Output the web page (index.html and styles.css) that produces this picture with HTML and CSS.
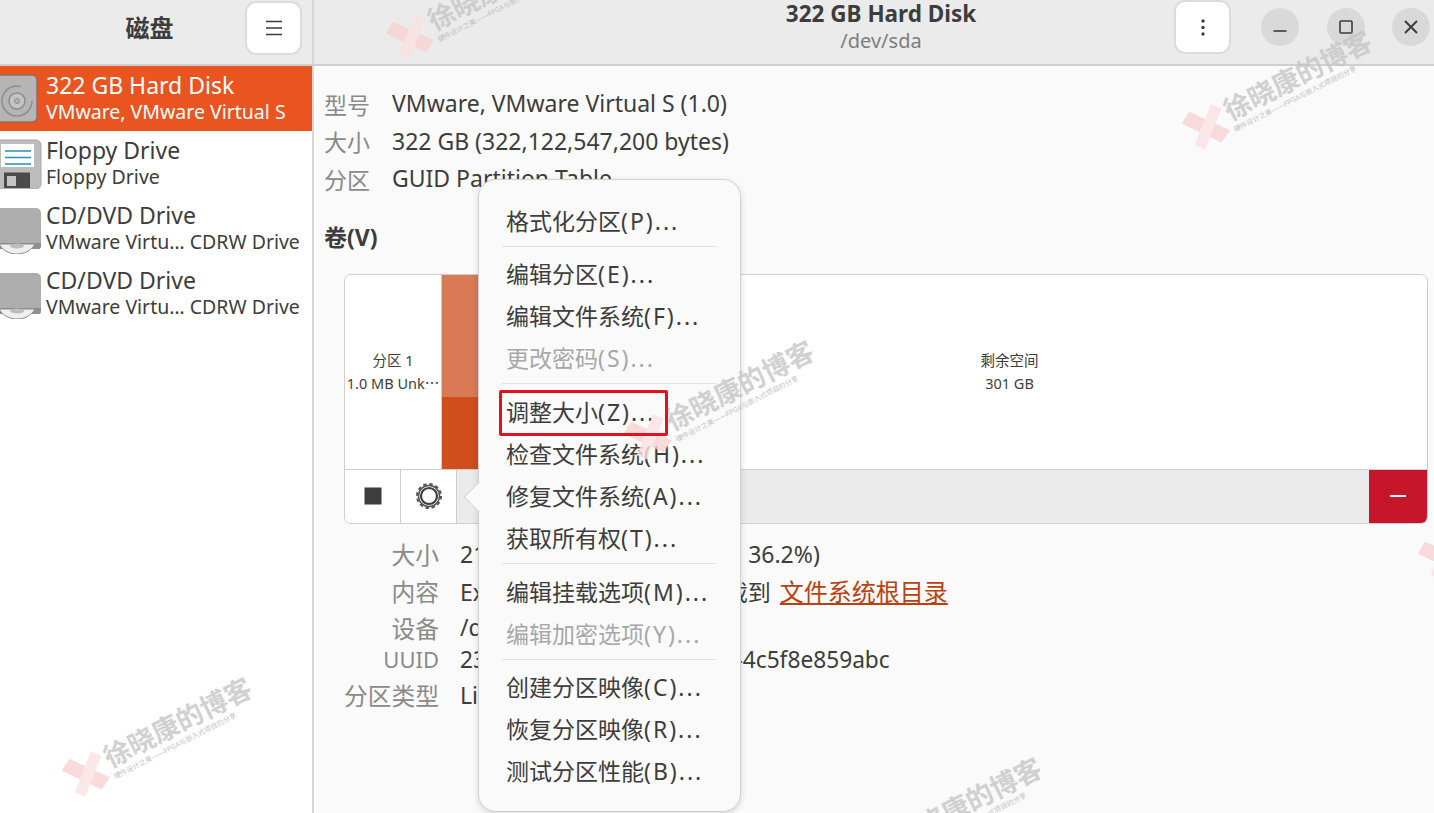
FILE: index.html
```html
<!DOCTYPE html>
<html lang="zh-CN">
<head>
    <meta charset="UTF-8">
    <title>磁盘</title>
    <link rel="stylesheet" href="styles.css">
</head>
<body>
<svg class="defs" width="0" height="0">
    <symbol id="wm-x" viewBox="0 0 42 42">
        <path d="M0 7L12 0l28 35-13 7z" fill="#f9d3d3"/>
        <path d="M35 3l7 9L9 41l-7-9z" fill="#fbe2e2"/>
    </symbol>
    <symbol id="cd-drive" viewBox="0 0 44 50">
        <path d="M-6 9a5 5 0 0 1 5-5h37a5 5 0 0 1 5 5v33a3 3 0 0 1-3 3H-6z" fill="#adadad"/>
        <path d="M-6 39h47v3a3 3 0 0 1-3 3H-6z" fill="#8f8f8f"/>
        <path d="M-1 40h36c-4 7-11 10-18 10S3 47-1 40z" fill="#efefef" stroke="#8a8a8a"/>
        <ellipse cx="17" cy="42" rx="7" ry="2.500" fill="#bdbdbd"/>
    </symbol>
</svg>
<div class="window">
    <!-- Header bar -->
    <header class="titlebar">
        <div class="side-head">
            <h1 class="side-title">磁盘</h1>
            <button class="head-btn">
                <svg width="18" height="16" viewBox="0 0 18 16"><path d="M1 1.500h16M1 8h16M1 14.500h16" stroke="#3d3d3d" stroke-width="1.600"/></svg>
            </button>
        </div>
        <div class="main-head">
            <div class="disk-title">
                <div class="disk-name">322 GB Hard Disk</div>
                <div class="disk-path">/dev/sda</div>
            </div>
            <button class="head-btn">
                <svg width="6" height="17" viewBox="0 0 6 17"><circle cx="3" cy="2" r="1.700" fill="#3d3d3d"/><circle cx="3" cy="8.500" r="1.700" fill="#3d3d3d"/><circle cx="3" cy="15" r="1.700" fill="#3d3d3d"/></svg>
            </button>
            <div class="win-controls">
                <button class="win-btn">
                    <svg width="38" height="38" viewBox="0 0 38 38"><path d="M12.500 23h13" stroke="#3d3d3d" stroke-width="1.600"/></svg>
                </button>
                <button class="win-btn">
                    <svg width="38" height="38" viewBox="0 0 38 38"><rect x="13" y="13" width="12" height="12" rx="1" fill="none" stroke="#3d3d3d" stroke-width="1.600"/></svg>
                </button>
                <button class="win-btn">
                    <svg width="38" height="38" viewBox="0 0 38 38"><path d="M13 13l12 12M25 13L13 25" stroke="#3d3d3d" stroke-width="2"/></svg>
                </button>
            </div>
        </div>
    </header>

    <div class="panes">
        <!-- Drive list -->
        <aside class="sidebar">
            <div class="drive drive-active">
                <svg class="drive-icon" width="44" height="50" viewBox="0 0 44 50">
                    <rect x="-6" y="1" width="43" height="47" rx="5" fill="#b5b5b5" stroke="#8a6f60" stroke-width="1.500"/>
                    <circle cx="17" cy="27" r="15" fill="none" stroke="#8c8c8c" stroke-width="1.500" stroke-dasharray="74 20"/>
                    <circle cx="17" cy="27" r="8" fill="#c4c4c4" stroke="#8c8c8c" stroke-width="1.500"/>
                    <circle cx="17" cy="27" r="2.500" fill="#b5b5b5" stroke="#8c8c8c"/>
                </svg>
                <div class="drive-text">
                    <div class="drive-name">322 GB Hard Disk</div>
                    <div class="drive-sub">VMware, VMware Virtual S</div>
                </div>
            </div>
            <div class="drive">
                <svg class="drive-icon" width="44" height="50" viewBox="0 0 44 50">
                    <rect x="-6" y="1" width="47" height="49" rx="5" fill="#bdbdbd" stroke="#a8a8a8"/>
                    <rect x="1" y="5" width="33" height="23" fill="#fff"/>
                    <path d="M5 12h26M5 18.500h26M5 25h26" stroke="#2c8fb5" stroke-width="1.500"/>
                    <rect x="4" y="33.500" width="26" height="15.500" fill="#4a4a4a"/>
                    <rect x="7" y="37" width="9" height="10" fill="#c4c4c4"/>
                </svg>
                <div class="drive-text">
                    <div class="drive-name">Floppy Drive</div>
                    <div class="drive-sub">Floppy Drive</div>
                </div>
            </div>
            <div class="drive">
                <svg class="drive-icon" width="44" height="50"><use href="#cd-drive"/></svg>
                <div class="drive-text">
                    <div class="drive-name">CD/DVD Drive</div>
                    <div class="drive-sub">VMware Virtu… CDRW Drive</div>
                </div>
            </div>
            <div class="drive">
                <svg class="drive-icon" width="44" height="50"><use href="#cd-drive"/></svg>
                <div class="drive-text">
                    <div class="drive-name">CD/DVD Drive</div>
                    <div class="drive-sub">VMware Virtu… CDRW Drive</div>
                </div>
            </div>
        </aside>

        <!-- Disk details -->
        <main class="content">
            <div class="info-grid">
                <div class="info-label">型号</div><div class="info-value">VMware, VMware Virtual S (1.0)</div>
                <div class="info-label">大小</div><div class="info-value">322 GB (322,122,547,200 bytes)</div>
                <div class="info-label">分区</div><div class="info-value">GUID Partition Table</div>
            </div>
            <h2 class="volumes-title">卷(V)</h2>

            <section class="volume-card">
                <div class="volume-bar">
                    <div class="part part-small">
                        <div>分区 1</div>
                        <div>1.0 MB Unk⋯</div>
                    </div>
                    <div class="part-used">
                        <div class="part-used-top"></div>
                        <div class="part-used-bottom"></div>
                    </div>
                    <div class="part part-free">
                        <div>剩余空间</div>
                        <div>301 GB</div>
                    </div>
                </div>
                <div class="volume-tools">
                    <button class="tool-btn">
                        <svg width="18" height="18" viewBox="0 0 18 18"><rect x="0.500" y="0.500" width="17" height="17" fill="#3d3d3d"/></svg>
                    </button>
                    <button class="tool-btn">
                        <svg width="28" height="28" viewBox="0 0 28 28">
                            <circle cx="14" cy="14" r="12" fill="none" stroke="#555" stroke-width="2" stroke-dasharray="3.500 2.780"/>
                            <circle cx="14" cy="14" r="10.500" fill="none" stroke="#555" stroke-width="1.500"/>
                            <circle cx="14" cy="14" r="8" fill="none" stroke="#3d3d3d" stroke-width="2.200"/>
                        </svg>
                    </button>
                    <div class="tools-gap"></div>
                    <button class="tool-delete">
                        <svg width="18" height="4" viewBox="0 0 18 4"><path d="M1 2h16" stroke="#fff" stroke-width="2"/></svg>
                    </button>
                </div>
            </section>

            <div class="detail-grid">
                <div class="detail-label">大小</div><div class="detail-value">215 GB—137 GB 可用(已用 36.2%)</div>
                <div class="detail-label">内容</div><div class="detail-value">Ext4 (version 1.0) — 已挂载到 <a class="root-link">文件系统根目录</a></div>
                <div class="detail-label">设备</div><div class="detail-value">/dev/sda3</div>
                <div class="detail-label detail-latin">UUID</div><div class="detail-value detail-latin">23a1c4e7-9b02-4d16-8f3a-4c5f8e859abc</div>
                <div class="detail-label">分区类型</div><div class="detail-value">Linux 文件系统</div>
            </div>
        </main>
    </div>

    <!-- Partition menu -->
    <div class="popover">
        <div class="popover-arrow"></div>
        <div class="menu-item">格式化分区<span class="menu-key">(P)...</span></div>
        <div class="menu-sep"></div>
        <div class="menu-item">编辑分区<span class="menu-key">(E)...</span></div>
        <div class="menu-item">编辑文件系统<span class="menu-key">(F)...</span></div>
        <div class="menu-item menu-disabled">更改密码<span class="menu-key">(S)...</span></div>
        <div class="menu-sep"></div>
        <div class="menu-item">调整大小<span class="menu-key">(Z)...</span></div>
        <div class="menu-item">检查文件系统<span class="menu-key">(H)...</span></div>
        <div class="menu-item">修复文件系统<span class="menu-key">(A)...</span></div>
        <div class="menu-item">获取所有权<span class="menu-key">(T)...</span></div>
        <div class="menu-sep"></div>
        <div class="menu-item">编辑挂载选项<span class="menu-key">(M)...</span></div>
        <div class="menu-item menu-disabled">编辑加密选项<span class="menu-key">(Y)...</span></div>
        <div class="menu-sep"></div>
        <div class="menu-item">创建分区映像<span class="menu-key">(C)...</span></div>
        <div class="menu-item">恢复分区映像<span class="menu-key">(R)...</span></div>
        <div class="menu-item">测试分区性能<span class="menu-key">(B)...</span></div>
    </div>

    <!-- Watermarks -->
    <div class="wm wm-1"><svg class="wm-x" width="42" height="42"><use href="#wm-x"/></svg><div><div class="wm-title">徐晓康的博客</div><div class="wm-sub">硬件设计之美——FPGA与嵌入式项目的分享</div></div></div>
    <div class="wm wm-2"><svg class="wm-x" width="42" height="42"><use href="#wm-x"/></svg><div><div class="wm-title">徐晓康的博客</div><div class="wm-sub">硬件设计之美——FPGA与嵌入式项目的分享</div></div></div>
    <div class="wm wm-3"><svg class="wm-x" width="42" height="42"><use href="#wm-x"/></svg><div><div class="wm-title">徐晓康的博客</div><div class="wm-sub">硬件设计之美——FPGA与嵌入式项目的分享</div></div></div>
    <div class="wm wm-4"><svg class="wm-x" width="42" height="42"><use href="#wm-x"/></svg><div><div class="wm-title">徐晓康的博客</div><div class="wm-sub">硬件设计之美——FPGA与嵌入式项目的分享</div></div></div>
    <div class="wm wm-5"><svg class="wm-x" width="42" height="42"><use href="#wm-x"/></svg><div><div class="wm-title">徐晓康的博客</div><div class="wm-sub">硬件设计之美——FPGA与嵌入式项目的分享</div></div></div>
    <div class="wm wm-6"><svg class="wm-x" width="42" height="42"><use href="#wm-x"/></svg><div><div class="wm-title">徐晓康的博客</div><div class="wm-sub">硬件设计之美——FPGA与嵌入式项目的分享</div></div></div>
    <div class="wm wm-7"><svg class="wm-x" width="42" height="42"><use href="#wm-x"/></svg><div><div class="wm-title">徐晓康的博客</div><div class="wm-sub">硬件设计之美——FPGA与嵌入式项目的分享</div></div></div>

    <div class="marker"></div>
</div>
</body>
</html>
```

FILE: styles.css
```css
* {
    box-sizing: border-box;
}
html, body {
    margin: 0;
    height: 100%;
    overflow: hidden;
}
body {
    font-family: "Noto Sans", "Noto Sans CJK SC", sans-serif;
    color: #3d3d3d;
    background: #fafafa;
}
button {
    padding: 0;
    border: none;
    background: none;
    font: inherit;
    display: flex;
    align-items: center;
    justify-content: center;
}
.defs {
    position: absolute;
}
.window {
    position: relative;
    width: 1434px;
    height: 813px;
    display: flex;
    flex-direction: column;
    overflow: hidden;
}

/* Header bar */
.titlebar {
    display: flex;
    height: 66px;
    flex: none;
    background: #ebebeb;
    border-bottom: 2px solid #cfcfcf;
}
.side-head {
    width: 314px;
    flex: none;
    display: flex;
    align-items: flex-start;
    padding: 1px 10px 0 0;
    border-right: 2px solid #d6d6d6;
}
.side-title {
    flex: 1;
    margin: 11px 0 0;
    padding-left: 54px;
    text-align: center;
    font-size: 24px;
    line-height: 32px;
    font-weight: 700;
}
.head-btn {
    width: 57px;
    height: 54px;
    flex: none;
    background: #fff;
    border: 2px solid #dcdcdc;
    border-radius: 11px;
}
.main-head {
    flex: 1;
    display: flex;
    align-items: flex-start;
}
.disk-title {
    width: 400px;
    margin-left: 367px;
    margin-right: 93px;
    text-align: center;
}
.disk-name {
    font-size: 22.500px;
    font-weight: 700;
    line-height: 28px;
}
.disk-path {
    font-size: 20px;
    line-height: 26px;
    color: #7d7d7d;
}
.win-controls {
    display: flex;
    gap: 27.500px;
    margin: 8px 0 0 30px;
}
.win-btn {
    width: 38px;
    height: 38px;
    border-radius: 50%;
    background: #d9d9d9;
}

/* Panes */
.panes {
    flex: 1;
    display: flex;
    min-height: 0;
}
.sidebar {
    width: 314px;
    flex: none;
    background: #fff;
    border-right: 2px solid #d6d6d6;
}
.drive {
    height: 65px;
    display: flex;
    align-items: center;
    gap: 2px;
}
.drive-active {
    background: #e95420;
    color: #fff;
}
.drive-icon {
    flex: none;
    overflow: hidden;
}
.drive-text {
    padding-bottom: 3px;
    white-space: nowrap;
}
.drive-name {
    font-size: 23px;
    line-height: 30px;
}
.drive-sub {
    font-size: 19.500px;
    line-height: 24px;
}

/* Content */
.content {
    flex: 1;
    padding: 19px 6px 0 10px;
    background: #fafafa;
}
.info-grid {
    display: grid;
    grid-template-columns: 68px 1fr;
    grid-auto-rows: 37.500px;
    align-items: center;
    font-size: 23px;
}
.info-label {
    color: #8a8a8a;
    line-height: 37px;
    padding-top: 3px;
}
.info-value {
    line-height: 37px;
}
.volumes-title {
    margin: 22px 0 0;
    font-size: 23px;
    line-height: 34px;
    font-weight: 700;
}
.volume-card {
    margin: 20px 0 0 20px;
    height: 250px;
    display: flex;
    flex-direction: column;
    border: 1px solid #cfcfcf;
    border-radius: 7px;
    overflow: hidden;
    background: #ebebeb;
}
.volume-bar {
    height: 195px;
    flex: none;
    display: flex;
    background: #fff;
    border-bottom: 1px solid #cfcfcf;
}
.part {
    display: flex;
    flex-direction: column;
    align-items: center;
    justify-content: center;
    font-size: 14.500px;
    line-height: 23px;
    white-space: nowrap;
}
.part-small {
    width: 97px;
    border-right: 1px solid #cfcfcf;
}
.part-free {
    flex: 1;
}
.part-used {
    width: 150px;
    display: flex;
    flex-direction: column;
}
.part-used-top {
    height: 122px;
    background: #d87a56;
}
.part-used-bottom {
    flex: 1;
    background: #cf4e1b;
}
.volume-tools {
    flex: 1;
    display: flex;
}
.tool-btn {
    width: 56px;
    background: #fff;
    border-right: 1px solid #cfcfcf;
}
.tools-gap {
    flex: 1;
}
.tool-delete {
    width: 58px;
    background: #c7162b;
}
.detail-grid {
    display: grid;
    grid-template-columns: 115px 1fr;
    grid-template-rows: 37px 37px 37px 27px 43px;
    column-gap: 21px;
    margin: 11px 0 0 0;
    align-items: center;
    font-size: 23px;
    white-space: nowrap;
}
.detail-label {
    text-align: right;
    font-size: 23.750px;
    color: #8a8a8a;
}
.detail-label.detail-latin {
    font-size: 22px;
}
.detail-value.detail-latin {
    font-size: 22.700px;
}
.root-link {
    margin-left: 3px;
    font-size: 24px;
    color: #b8410f;
    text-decoration: underline;
}

/* Popover menu */
.popover {
    position: absolute;
    left: 478px;
    top: 179px;
    width: 263px;
    height: 633px;
    padding: 19.500px 24px 0 27px;
    background: #fafafa;
    border: 1px solid #d2d2d2;
    border-radius: 18px;
    box-shadow: 0 2px 6px rgba(0, 0, 0, 0.15);
    font-size: 23px;
}
.popover-arrow {
    position: absolute;
    left: -11px;
    top: 306px;
    width: 22px;
    height: 22px;
    background: #fafafa;
    border-left: 1px solid #d2d2d2;
    border-bottom: 1px solid #d2d2d2;
    transform: rotate(45deg);
}
.menu-item {
    height: 42px;
    line-height: 42px;
    white-space: nowrap;
}
.menu-key {
    letter-spacing: 2px;
}
.menu-disabled {
    color: #a8a8a8;
}
.menu-sep {
    height: 1px;
    margin: 4px 0 6.700px -4px;
    background: #e2e2e2;
}
.marker {
    position: absolute;
    left: 499px;
    top: 390px;
    width: 169px;
    height: 46px;
    border: 3px solid #e3101e;
    border-radius: 2px;
    pointer-events: none;
}

/* Watermarks */
.wm {
    position: absolute;
    display: flex;
    align-items: center;
    gap: 2px;
    transform: rotate(-27deg);
    transform-origin: left center;
    white-space: nowrap;
    pointer-events: none;
    opacity: 0.8;
}
.wm-x {
    flex: none;
}
.wm-title {
    font-size: 27px;
    line-height: 30px;
    font-weight: 700;
    color: #c6c6c6;
}
.wm-sub {
    font-size: 7px;
    line-height: 9px;
    color: #b5b5b5;
}
.wm-1 { left: 68px; top: 762px; }
.wm-2 { left: 392px; top: 25px; }
.wm-3 { left: 1188px; top: 115px; }
.wm-4 { left: 630px; top: 425px; }
.wm-5 { left: 858px; top: 842px; }
.wm-6 { left: -192px; top: 345px; }
.wm-7 { left: 1424px; top: 545px; }
```
